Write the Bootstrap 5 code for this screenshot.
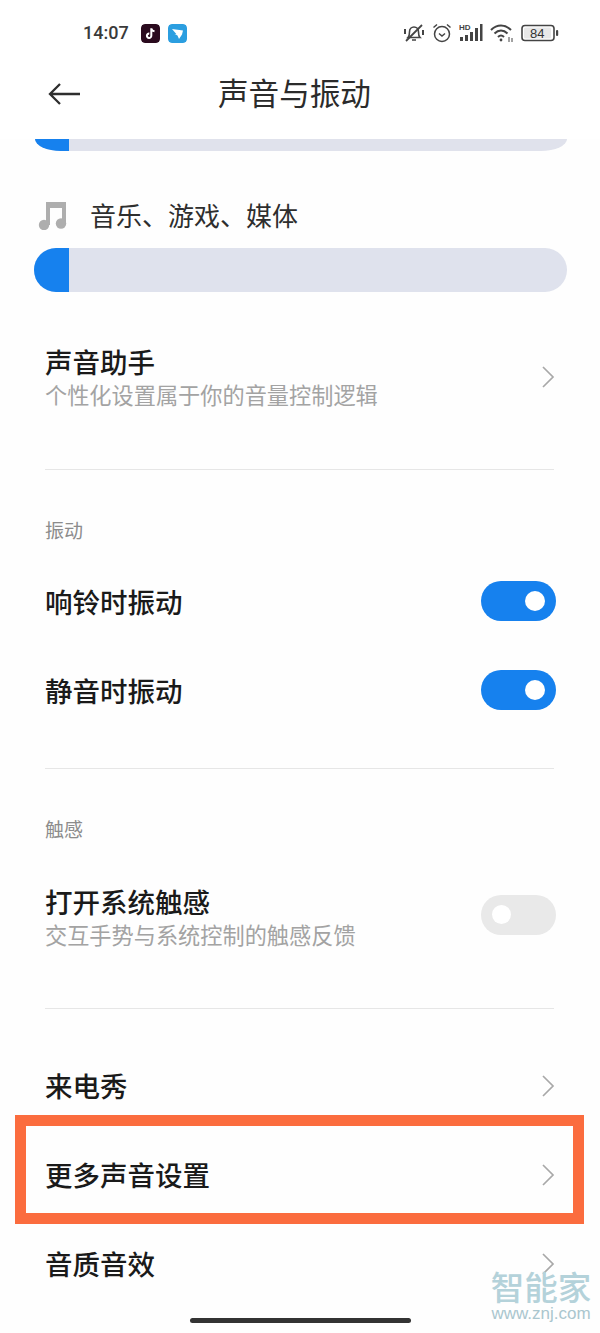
<!doctype html>
<html lang="zh"><head><meta charset="utf-8"><title>声音与振动</title>
<link href="https://cdn.jsdelivr.net/npm/bootstrap@5.3.0/dist/css/bootstrap.min.css" rel="stylesheet">
<style>
html,body{margin:0;background:#fefefe}
body{font-family:"Noto Sans CJK SC","Liberation Sans",sans-serif;color:#1c1c1c}
.phone{position:relative;width:600px;height:1333px;overflow:hidden;background:#fefefe}
.statusbar{height:66px;padding:0 41px 0 83px;background:#fff}
.clock{font:500 18px/1 Roboto,sans-serif;color:#3a3a3a;width:58px}
.appicon{width:19px;height:19px;border-radius:4px;display:block}
.statusicons{gap:7px}
.titlebar{height:73px;padding:0 0 18px 48px;background:#fff;position:relative}
.titlebar h1{position:absolute;left:218px;top:6px;margin:0;font-size:30.6px;line-height:40px;font-weight:400;color:#2b2b2b;white-space:nowrap}
.slidercut{height:12px;margin:0 33px 0 35px;background:#e0e2ec;border-radius:0 0 26px 26px / 0 0 12px 12px;overflow:hidden}
.slidercut span{display:block;width:34px;height:100%;background:#1681ee}
.musicrow{height:97px;padding:44px 0 0 38px;gap:24px}
.musicrow svg{flex:none;margin-top:6px}
.musicrow span{font-size:26px;line-height:40px;color:#2e2e2e;margin-left:-1px}
.volume{height:44px;margin:0 33px 0 34px;background:#dfe2ed;border-radius:22px;overflow:hidden}
.volume span{display:block;width:35px;height:100%;background:#1681ee}
.rowitem{padding:0 44px 0 45px}
.rowlabel{font-size:27.5px;line-height:38px;font-weight:500;color:#1a1a1a;white-space:nowrap}
.rowsub{font-size:22.2px;line-height:30px;margin-top:-1px;color:#a3a3a3;white-space:nowrap}
.chev{display:block;margin:3px 1px 0 0}
.assist{height:177px;padding-top:50px;align-items:flex-start!important}
.assist .chev{margin-top:23px}
.hr1{height:1px;margin:0 46px 0 45px;background:#e6e6e6}
.sectionlabel{font-size:19px;line-height:26px;color:#8c8c8c;padding:47px 0 0 45px}
.label-vib{height:86px}
.label-hap{height:94px}
.gap-vib{margin-top:34px}
.gap-hap{margin-top:41px}
.switchrow{height:89px;padding-right:44px}
.hapticrow{height:104px}
.listgap{height:31px}
.pill{width:75px;height:40px;border-radius:20px;background:#1681ee;position:relative;flex:none}
.pill::after{content:"";position:absolute;width:20px;height:20px;border-radius:50%;background:#fff;top:10px;left:44px}
.pill.off{background:#e9e9e9}
.pill.off::after{left:11px;width:19px;height:19px}
.plain{height:89px}
.callout{position:absolute;left:15px;top:1115px;width:569px;height:109px;border:11px solid #fb6c3e;pointer-events:none}
.homebar{position:absolute;left:190px;top:1318px;width:221px;height:5px;border-radius:3px;background:#333}
.wm{position:absolute;left:489px;top:1273px;width:104px;text-align:center;color:#b4d2da}
.wm b{display:block;font-family:"Liberation Sans","Noto Sans CJK SC",sans-serif;font-size:33.5px;line-height:32px;font-weight:500;white-space:nowrap}
.wm i{display:block;font:400 17px/18px "Liberation Sans",sans-serif;white-space:nowrap;color:#aac6ce}
</style></head><body>
<div class="phone">
 <div class="statusbar d-flex align-items-center">
  <span class="clock">14:07</span>
  <svg class="appicon" viewBox="0 0 19 19"><rect width="19" height="19" rx="4" fill="#2a0a1e"/><path d="M10.300 4.200v7.600a2.200 2.200 0 1 1-2-2.200M10.300 4.400c.3 1.700 1.400 2.700 3.200 2.900" fill="none" stroke="#fff" stroke-width="2"/></svg>
  <svg class="appicon ms-2" viewBox="0 0 19 19"><rect width="19" height="19" rx="4" fill="#2b9ee0"/><path d="M4 5l11 1.500-1 4-3 4.500-1.500-3.500L6.500 10l2 .2z" fill="#fff"/></svg>
  <div class="ms-auto d-flex align-items-center statusicons">
   <svg width="22" height="22" viewBox="0 0 22 22" fill="none" stroke="#444" stroke-width="1.600"><path d="M5 15.500c1.500-1.500 1.500-3 1.500-5.500 0-3 2-5 4.500-5s4.500 2 4.500 5c0 2.500 0 4 1.500 5.500zM9 18h4"/><path d="M3 19L19 3" stroke-width="1.800"/><path d="M2 7v5M20 8v5" stroke-width="2"/></svg>
   <svg width="20" height="22" viewBox="0 0 20 22" fill="none" stroke="#444" stroke-width="1.500"><circle cx="10" cy="12" r="7.500"/><path d="M7 11.500l3 2.500 3-2.500M1.500 5.500l3.500-3M18.500 5.500l-3.500-3"/></svg>
   <svg width="24" height="22" viewBox="0 0 24 22"><text x="0" y="7.500" font-family="Liberation Sans" font-size="8" font-weight="700" fill="#444">HD</text><path fill="#444" d="M1 15h3v4H1zM6 13h3v6H6zM11 10h3v9h-3zM16 6h3v13h-3zM21 2h2.500v17H21z"/></svg>
   <svg width="24" height="22" viewBox="0 0 24 22" fill="none" stroke="#444" stroke-width="2"><path d="M1 8c6-6 14-6 20 0M4.500 11.500c4-4 9-4 13 0M8 15c2-2 4-2 6 0"/><circle cx="11" cy="18" r="1.400" fill="#444" stroke="none"/><path d="M19 15v5M22 16v4" stroke-width="1"/></svg>
   <svg width="38" height="18" viewBox="0 0 38 18"><rect x="1" y="1.500" width="32" height="15" rx="3" fill="none" stroke="#444" stroke-width="1.600"/><rect x="3" y="3.500" width="27" height="11" rx="1.500" fill="#e8e8e8"/><text x="9" y="14" font-family="Liberation Sans" font-size="13" fill="#333">84</text><rect x="35" y="6" width="2.200" height="6" rx="1" fill="#444"/></svg>
  </div>
 </div>
 <div class="titlebar d-flex align-items-center">
  <svg width="33" height="24" viewBox="0 0 33 24" fill="none" stroke="#2e2e2e" stroke-width="2.300"><path d="M32 12H2M12 2L2 12l10 10"/></svg>
  <h1>声音与振动</h1>
 </div>
 <div class="slidercut"><span></span></div>
 <div class="musicrow d-flex align-items-start">
  <svg width="29" height="29" viewBox="0 0 29 29"><path fill="#aeaeae" d="M8 1h20v21h-4V7H12v17H8z"/><circle cx="6" cy="24" r="5.200" fill="#aeaeae"/><circle cx="23" cy="22.500" r="5.200" fill="#aeaeae"/></svg>
  <span>音乐、游戏、媒体</span>
 </div>
 <div class="volume"><span></span></div>
 <div class="rowitem assist d-flex justify-content-between">
  <div><div class="rowlabel">声音助手</div><div class="rowsub">个性化设置属于你的音量控制逻辑</div></div>
  <svg class="chev" width="14" height="24" viewBox="0 0 14 24" fill="none" stroke="#a8a8a8" stroke-width="1.700"><path d="M2 2l10 10L2 22"/></svg>
 </div>
 <div class="hr1"></div>
 <div class="sectionlabel label-vib">振动</div>
 <div class="rowitem switchrow d-flex align-items-center justify-content-between"><span class="rowlabel">响铃时振动</span><span class="pill"></span></div>
 <div class="rowitem switchrow d-flex align-items-center justify-content-between"><span class="rowlabel">静音时振动</span><span class="pill"></span></div>
 <div class="hr1 gap-vib"></div>
 <div class="sectionlabel label-hap">触感</div>
 <div class="rowitem hapticrow d-flex align-items-center justify-content-between"><div><div class="rowlabel">打开系统触感</div><div class="rowsub">交互手势与系统控制的触感反馈</div></div><span class="pill off"></span></div>
 <div class="hr1 gap-hap"></div>
 <div class="listgap"></div>
 <div class="rowitem plain d-flex align-items-center justify-content-between"><span class="rowlabel">来电秀</span><svg class="chev" width="14" height="24" viewBox="0 0 14 24" fill="none" stroke="#a8a8a8" stroke-width="1.700"><path d="M2 2l10 10L2 22"/></svg></div>
 <div class="rowitem plain d-flex align-items-center justify-content-between"><span class="rowlabel">更多声音设置</span><svg class="chev" width="14" height="24" viewBox="0 0 14 24" fill="none" stroke="#a8a8a8" stroke-width="1.700"><path d="M2 2l10 10L2 22"/></svg></div>
 <div class="rowitem plain d-flex align-items-center justify-content-between"><span class="rowlabel">音质音效</span><svg class="chev" width="14" height="24" viewBox="0 0 14 24" fill="none" stroke="#a8a8a8" stroke-width="1.700"><path d="M2 2l10 10L2 22"/></svg></div>
 <div class="callout"></div>
 <div class="homebar"></div>
 <div class="wm"><b>智能家</b><i>www.znj.com</i></div>
</div>
<script src="https://cdn.jsdelivr.net/npm/bootstrap@5.3.0/dist/js/bootstrap.bundle.min.js"></script>
</body></html>
